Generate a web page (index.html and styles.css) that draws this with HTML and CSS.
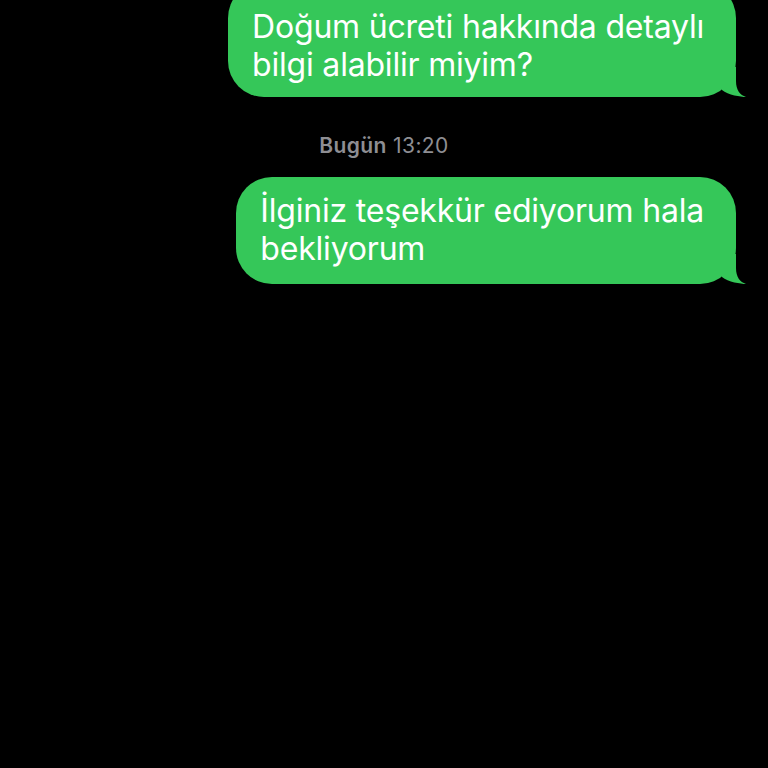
FILE: index.html
```html
<!DOCTYPE html>
<html lang="tr">
<head>
<meta charset="utf-8">
<link rel="stylesheet" href="styles.css">
</head>
<body>
<main class="thread">
  <div class="bubble first">Doğum ücreti hakkında detaylı<br>bilgi alabilir miyim?<svg class="tail" viewBox="0 0 30 30" width="30" height="30" aria-hidden="true"><path d="M18 0 L18 14 C18 23 22 28 28 30 C23 30 10 28 4 23 L4 0 Z"/></svg></div>
  <div class="stamp"><b>Bugün</b> 13:20</div>
  <div class="bubble">İlginiz teşekkür ediyorum hala<br>bekliyorum<svg class="tail" viewBox="0 0 30 30" width="30" height="30" aria-hidden="true"><path d="M18 0 L18 14 C18 23 22 28 28 30 C23 30 10 28 4 23 L4 0 Z"/></svg></div>
</main>
</body>
</html>
```
FILE: styles.css
```css
html, body {
  margin: 0;
  padding: 0;
  background: #000;
  height: 768px;
  overflow: hidden;
}
.thread {
  display: flex;
  flex-direction: column;
  align-items: flex-end;
  padding-right: 32px;
  font-family: Inter, "Noto Sans", sans-serif;
}
.bubble {
  position: relative;
  background: #35c759;
  color: #fff;
  font-size: 32px;
  line-height: 38px;
  letter-spacing: -0.2px;
  padding: 15px 32px 16px 24px;
  border-radius: 36px;
}
.bubble.first {
  margin-top: -18px;
  padding-top: 26px;
  padding-bottom: 13px;
}
.tail {
  position: absolute;
  right: -12px;
  bottom: 0;
  fill: #35c759;
}
.stamp {
  align-self: center;
  margin: 37px -32px 19px 0;
  font-size: 21px;
  line-height: 24px;
  letter-spacing: 0.4px;
  color: #8e8e93;
}
.stamp b {
  font-weight: 600;
}
```
